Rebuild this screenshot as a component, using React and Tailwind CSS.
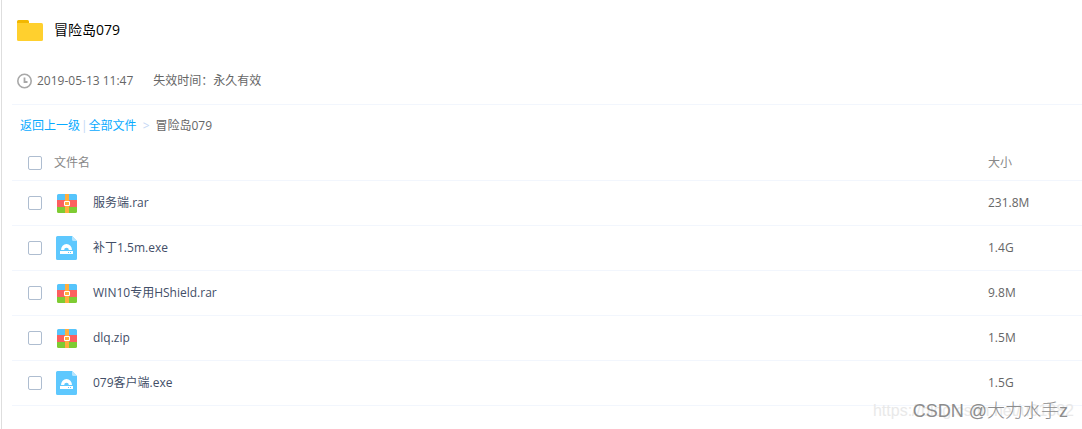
import React, { useState } from 'react'

const FILES = [
  { id: 1, name: '服务端.rar', size: '231.8M', type: 'archive' },
  { id: 2, name: '补丁1.5m.exe', size: '1.4G', type: 'program' },
  { id: 3, name: 'WIN10专用HShield.rar', size: '9.8M', type: 'archive' },
  { id: 4, name: 'dlq.zip', size: '1.5M', type: 'archive' },
  { id: 5, name: '079客户端.exe', size: '1.5G', type: 'program' },
]

const FolderIcon = () => (
  <svg width="26" height="21" viewBox="0 0 26 21" aria-hidden="true">
    <path d="M0 6V1.5A1.5 1.5 0 0 1 1.500 0H10.500A1.500 1.500 0 0 1 12 1.500V6z" fill="#f2b800" />
    <path d="M0 3H24.500A1.500 1.500 0 0 1 26 4.500V19.500A1.500 1.500 0 0 1 24.500 21H1.500A1.500 1.500 0 0 1 0 19.500z" fill="#ffd02e" />
  </svg>
)

const ClockIcon = () => (
  <svg width="16" height="16" viewBox="0 0 16 16" fill="none" stroke="#a8a8a8" aria-hidden="true">
    <circle cx="7.500" cy="8" r="6.700" strokeWidth="1.600" />
    <path d="M7.500 4.500V9H10.500" strokeWidth="1.800" />
  </svg>
)

const ArchiveIcon = () => (
  <svg width="22" height="24" viewBox="0 0 22 24" aria-hidden="true">
    <path d="M1 9V4.500A1.500 1.500 0 0 1 2.500 3H19.500A1.500 1.500 0 0 1 21 4.500V9z" fill="#56c4fb" />
    <path d="M1 9H21V16H1z" fill="#fc5f5f" />
    <path d="M1 16H21V20.500A1.500 1.500 0 0 1 19.500 22H2.500A1.500 1.500 0 0 1 1 20.500z" fill="#7ecb32" />
    <path d="M9 3H13V22H9z" fill="#ffae3d" />
    <path d="M8.500 10.500H13.500V14.500H8.500z" fill="#ffae3d" stroke="#fff" />
  </svg>
)

const ProgramIcon = () => (
  <svg width="22" height="24" viewBox="0 0 22 24" aria-hidden="true">
    <path d="M1.500 0H16L21 5V22.500A1.500 1.500 0 0 1 19.500 24H1.500A1.500 1.500 0 0 1 0 22.500V1.500A1.500 1.500 0 0 1 1.500 0z" fill="#5ec8fe" />
    <path d="M16 0L21 5H17.500A1.500 1.500 0 0 1 16 3.500z" fill="#b5e5ff" />
    <path d="M5 14A5.500 6 0 0 1 16 14H12.800A2.300 2.300 0 0 0 8.200 14z" fill="#fff" />
    <path d="M4 15H17V18H4z" fill="#fff" />
    <path d="M12 16H13V17H12zM14 16H15V17H14z" fill="#5ec8fe" />
  </svg>
)

const Checkbox = ({ label, checked, onChange }) => (
  <input
    type="checkbox"
    aria-label={label}
    checked={checked}
    onChange={onChange}
    className="block size-3.5 appearance-none rounded-xs border border-[#aebdd0] bg-white checked:bg-[#09aaff]"
  />
)

const FileRow = ({ file, checked, onToggle }) => (
  <tr className="h-[45px] border-b border-[#f2f6fd]">
    <td className="pl-4">
      <Checkbox label={file.name} checked={checked} onChange={onToggle} />
    </td>
    <td>
      <div className="flex items-center gap-[15px] pl-0.5 text-[#424e67]">
        {file.type === 'archive' ? <ArchiveIcon /> : <ProgramIcon />}
        <span>{file.name}</span>
      </div>
    </td>
    <td className="text-[#666]">{file.size}</td>
  </tr>
)

const App = () => {
  const [selected, setSelected] = useState([])

  const toggle = (id) => {
    setSelected((prev) => (prev.includes(id) ? prev.filter((x) => x !== id) : [...prev, id]))
  }

  const toggleAll = () => {
    setSelected(selected.length === FILES.length ? [] : FILES.map((f) => f.id))
  }

  return (
    <div className="relative min-h-screen bg-white pl-px font-['Open_Sans','Noto_Sans_CJK_SC',sans-serif] text-xs text-[#666]">
      <div className="min-h-screen border-l border-[#dedede] pl-2.5">
        {/* Share info */}
        <header className="border-b border-[#f2f6fd] pt-4 pb-2.5">
          <div className="flex h-7 items-center gap-[11px] pl-[5px]">
            <FolderIcon />
            <h1 className="text-sm text-black">冒险岛079</h1>
          </div>
          <div className="mt-6 flex h-[26px] items-center pl-[5px]">
            <ClockIcon />
            <span className="ml-1">2019-05-13 11:47</span>
            <span className="ml-5">失效时间：永久有效</span>
          </div>
        </header>

        {/* Breadcrumb */}
        <nav className="flex h-[41px] items-center pl-2">
          <a href="#back" className="text-[#09aaff]">返回上一级</a>
          <span className="mx-px text-[#c3d9f5]">|</span>
          <a href="#all" className="text-[#09aaff]">全部文件</a>
          <span className="mx-1.5 text-[#c4d7f5]">&gt;</span>
          <span>冒险岛079</span>
        </nav>

        <table className="w-full table-fixed border-collapse text-left">
          <thead>
            <tr className="h-[34px] border-b border-[#f2f6fd] text-[#888]">
              <th className="w-[42px] pl-4 font-normal">
                <Checkbox label="全选" checked={selected.length === FILES.length} onChange={toggleAll} />
              </th>
              <th className="font-normal">文件名</th>
              <th className="w-[94px] font-normal">大小</th>
            </tr>
          </thead>
          <tbody>
            {FILES.map((file) => (
              <FileRow
                key={file.id}
                file={file}
                checked={selected.includes(file.id)}
                onToggle={() => toggle(file.id)}
              />
            ))}
          </tbody>
        </table>
      </div>

      {/* Watermarks */}
      <p className="pointer-events-none absolute right-2 bottom-1.5 font-['Liberation_Sans',sans-serif] text-base text-[#e9e9e9]">
        https://blog.csdn.net/u01382
      </p>
      <p className="pointer-events-none absolute right-3.5 bottom-1 font-['Liberation_Sans','Noto_Sans_CJK_SC',sans-serif] text-lg font-light text-[#8c8c8c]">
        CSDN @大力水手z
      </p>
    </div>
  )
}

export default App
